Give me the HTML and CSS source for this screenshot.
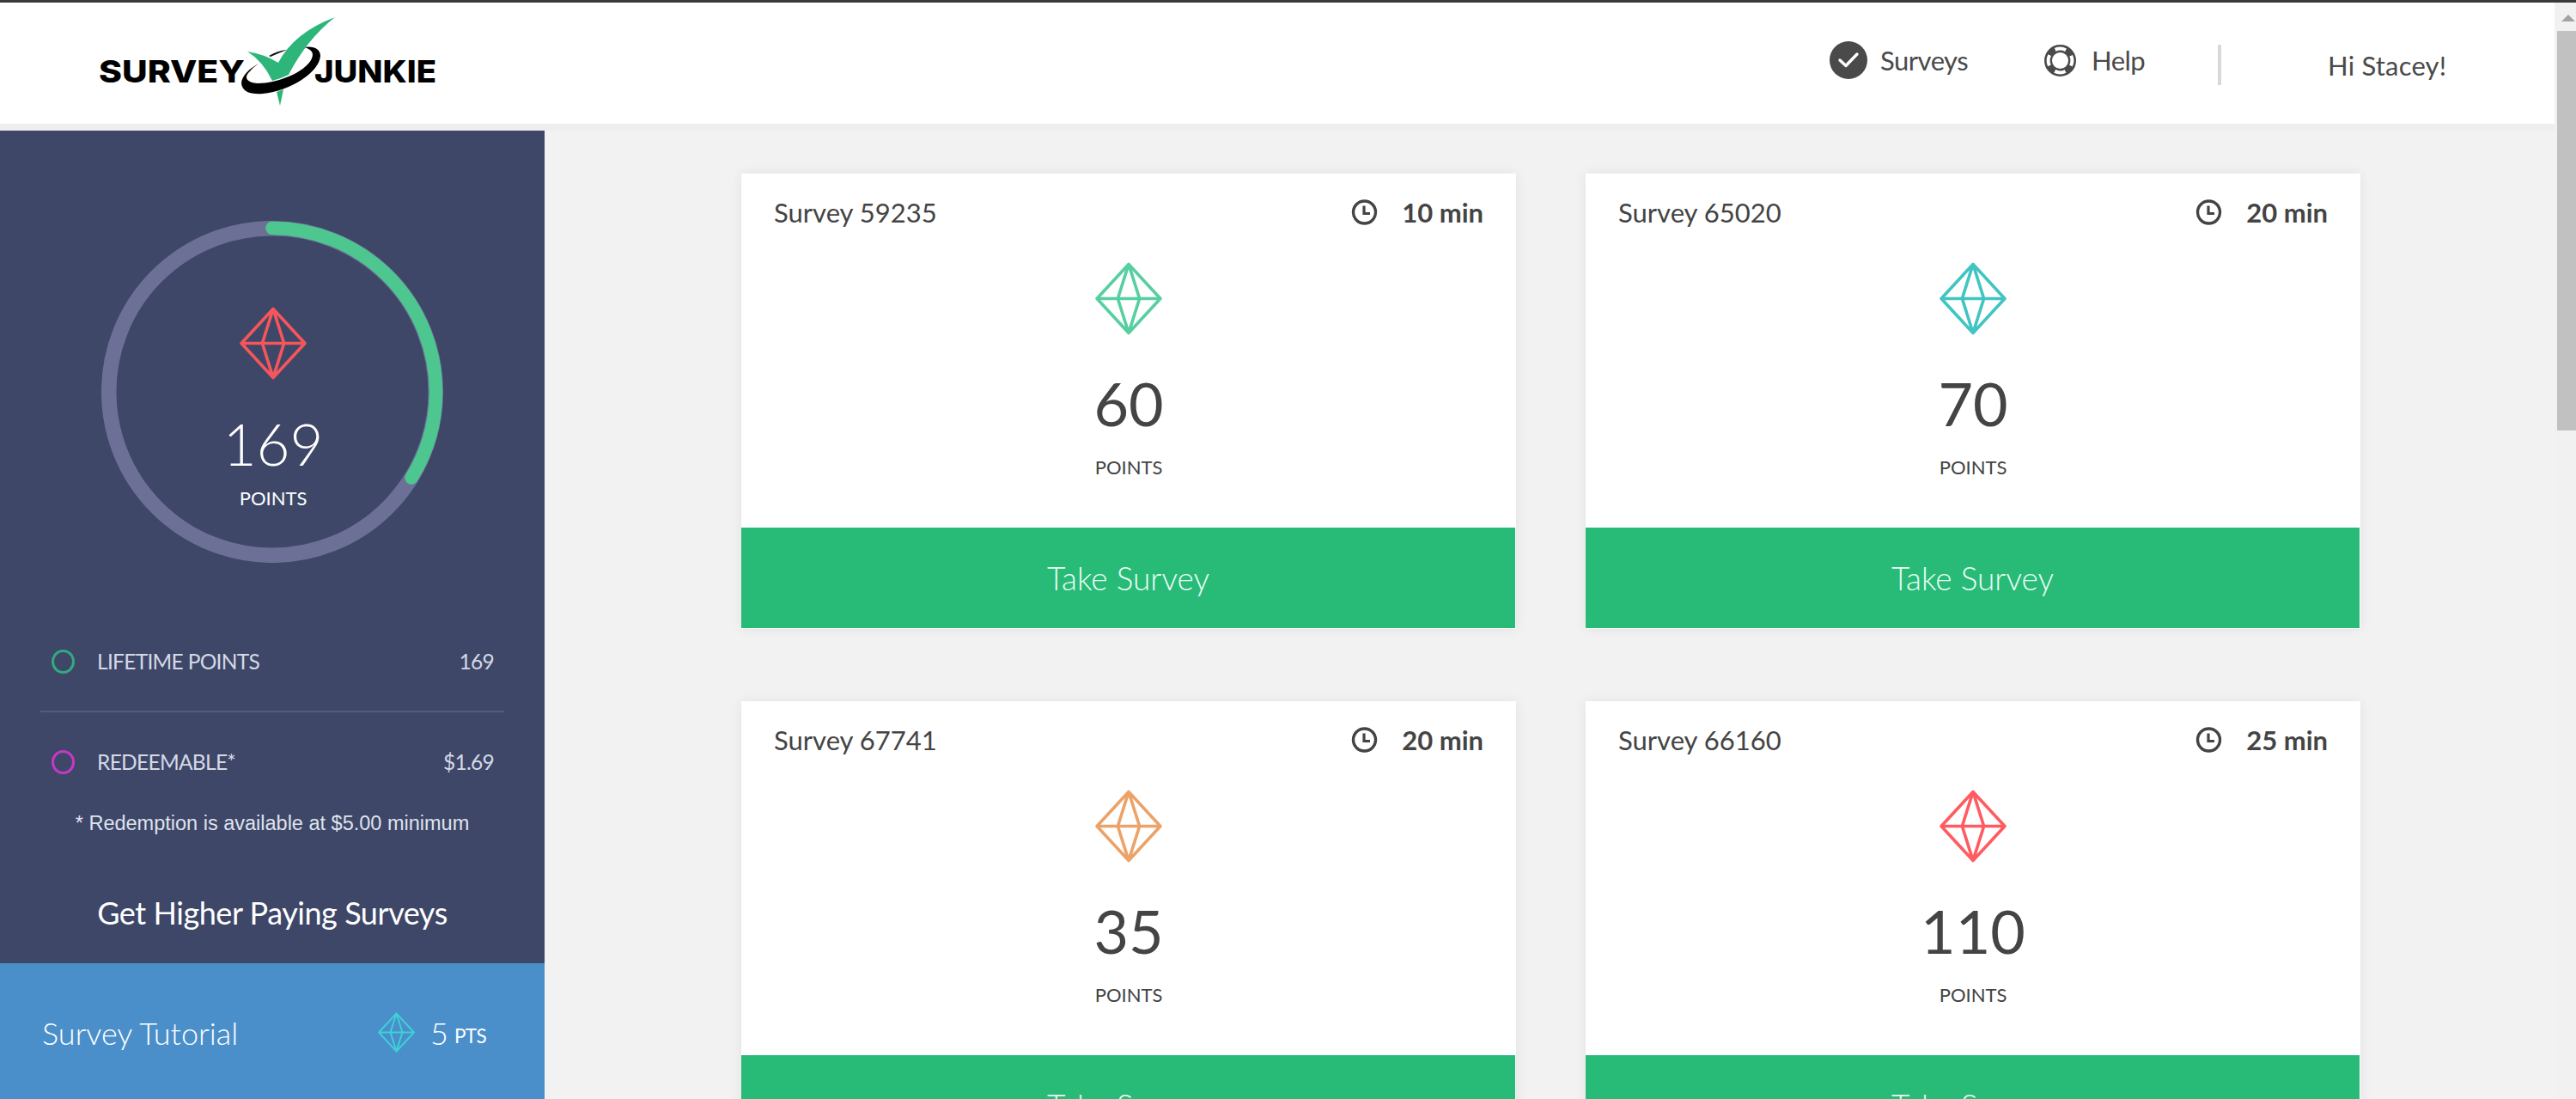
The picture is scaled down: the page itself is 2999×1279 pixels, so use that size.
FILE: index.html
```html
<!DOCTYPE html>
<html lang="en">
<head>
    <meta charset="UTF-8">
    <meta name="viewport" content="width=device-width, initial-scale=1.0">
    <title>Survey Junkie</title>
    <link rel="stylesheet" href="styles.css">
</head>
<body>
    <!-- Shared icons -->
    <svg class="sprite">
        <symbol id="gem" viewBox="0 0 77 84">
            <path d="M38.5 2.5 L75 42 L38.5 81.5 L2 42 Z M2 42 H75 M38.5 2.5 L26 42 L38.5 81.5 L51 42 Z" fill="none" stroke="currentColor" stroke-width="3.6" stroke-linejoin="round" />
        </symbol>
        <symbol id="clock" viewBox="0 0 31 30">
            <circle cx="15.5" cy="15" r="13" fill="none" stroke="currentColor" stroke-width="3.4" />
            <path d="M15 7.5 V16.5 H22" fill="none" stroke="currentColor" stroke-width="3.2" />
        </symbol>
    </svg>

    <div class="page">
        <header class="header">
            <svg class="logo" viewBox="0 0 400 110">
                <text class="logo-text" x="-1" y="79" textLength="170" lengthAdjust="spacingAndGlyphs">SURVEY</text>
                <text class="logo-text" x="250" y="79" textLength="142" lengthAdjust="spacingAndGlyphs">JUNKIE</text>
                <path d="M197 48 Q207 42 218 41 Q208 45 199 49 Z" fill="#111" />
                <path d="M185 57 C174 63 165 72 165 80 C166 90 176 93 190 92 C222 89 256 67 257 48 C257 40 249 36 238 38 C246 40 250 44 247 51 C240 67 207 80 184 80 C171 79 168 73 174 67 Q179 61 185 57 Z" fill="#000" />
                <path d="M172 43 Q192 46 208 56 Q226 21 274 3 Q241 29 220 70 Q210 75 201 77 Q190 54 172 43 Z M206 90 L214 87 L210 106 Z" fill="#2eb67a" />
            </svg>
            <nav class="nav">
                <a class="nav-item nav-surveys">
                    <svg width="44" height="44" viewBox="0 0 44 44">
                        <circle cx="22" cy="22" r="22" fill="#4a4a4a" />
                        <path d="M12 22 L19 28.5 L32 15" fill="none" stroke="#fff" stroke-width="3.4" stroke-linecap="round" stroke-linejoin="round" />
                    </svg>
                    <span>Surveys</span>
                </a>
                <a class="nav-item nav-help">
                    <svg width="37" height="37" viewBox="0 0 37 37">
                        <circle cx="18.5" cy="18.5" r="14" fill="none" stroke="#4a4a4a" stroke-width="9" />
                        <circle cx="18.5" cy="18.5" r="13.9" fill="none" stroke="#fff" stroke-width="4" stroke-dasharray="12.8 9.03" stroke-dashoffset="6.4" />
                    </svg>
                    <span>Help</span>
                </a>
                <div class="nav-divider"></div>
                <span class="greeting">Hi Stacey!</span>
            </nav>
        </header>

        <div class="layout">
            <aside class="sidebar">
                <div class="summary">
                    <div class="ring">
                        <svg class="ring-chart" viewBox="0 0 398 398">
                            <circle cx="199" cy="199" r="190.3" fill="none" stroke="#6d7096" stroke-width="17.5" />
                            <circle cx="199" cy="199" r="190.5" fill="none" stroke="#4dc78f" stroke-width="15.5" stroke-linecap="round" pathLength="500" stroke-dasharray="169 331" transform="rotate(-90 199 199)" />
                        </svg>
                        <div class="ring-info">
                            <svg class="gem red"><use href="#gem" /></svg>
                            <div class="ring-value">169</div>
                            <div class="points-label">POINTS</div>
                        </div>
                    </div>

                    <div class="stats">
                        <div class="stat">
                            <span class="dot green-dot"></span>
                            <span class="stat-name">LIFETIME POINTS</span>
                            <span class="stat-value">169</span>
                        </div>
                        <div class="stat">
                            <span class="dot pink-dot"></span>
                            <span class="stat-name">REDEEMABLE*</span>
                            <span class="stat-value">$1.69</span>
                        </div>
                    </div>
                    <p class="note">* Redemption is available at $5.00 minimum</p>
                    <h2 class="side-title">Get Higher Paying Surveys</h2>
                </div>
                <div class="tutorial">
                    <span class="tutorial-name">Survey Tutorial</span>
                    <svg class="tutorial-gem"><use href="#gem" /></svg>
                    <span class="tutorial-points">5</span>
                    <span class="tutorial-unit">PTS</span>
                </div>
            </aside>

            <main class="surveys">
                <section class="card">
                    <div class="card-head">
                        <span class="card-name">Survey 59235</span>
                        <svg class="clock"><use href="#clock" /></svg>
                        <span class="card-time">10 min</span>
                    </div>
                    <svg class="gem green"><use href="#gem" /></svg>
                    <div class="card-value">60</div>
                    <div class="points-label">POINTS</div>
                    <button class="take">Take Survey</button>
                </section>
                <section class="card">
                    <div class="card-head">
                        <span class="card-name">Survey 65020</span>
                        <svg class="clock"><use href="#clock" /></svg>
                        <span class="card-time">20 min</span>
                    </div>
                    <svg class="gem teal"><use href="#gem" /></svg>
                    <div class="card-value">70</div>
                    <div class="points-label">POINTS</div>
                    <button class="take">Take Survey</button>
                </section>
                <section class="card">
                    <div class="card-head">
                        <span class="card-name">Survey 67741</span>
                        <svg class="clock"><use href="#clock" /></svg>
                        <span class="card-time">20 min</span>
                    </div>
                    <svg class="gem orange"><use href="#gem" /></svg>
                    <div class="card-value">35</div>
                    <div class="points-label">POINTS</div>
                    <button class="take">Take Survey</button>
                </section>
                <section class="card">
                    <div class="card-head">
                        <span class="card-name">Survey 66160</span>
                        <svg class="clock"><use href="#clock" /></svg>
                        <span class="card-time">25 min</span>
                    </div>
                    <svg class="gem coral"><use href="#gem" /></svg>
                    <div class="card-value">110</div>
                    <div class="points-label">POINTS</div>
                    <button class="take">Take Survey</button>
                </section>
            </main>
        </div>
    </div>

    <div class="scrollbar">
        <div class="scroll-arrow"></div>
        <div class="scroll-thumb"></div>
    </div>
</body>
</html>
```
FILE: styles.css
```css
* {
    box-sizing: border-box;
}

html {
    overflow: hidden;
}

body {
    margin: 0;
    height: 1279px;
    display: flex;
    overflow: hidden;
    border-top: 3px solid #3a3a3a;
    background-color: #f2f2f2;
    color: #444;
    font-family: Lato, sans-serif;
}

svg {
    display: block;
    flex-shrink: 0;
}

.sprite {
    position: absolute;
    width: 0;
    height: 0;
}

.page {
    flex: 1;
}

/* Header */
.header {
    height: 149px;
    display: flex;
    justify-content: space-between;
    background-color: #fff;
    border-bottom: 8px solid #efedee;
}

.logo {
    width: 400px;
    height: 110px;
    margin: 14px 0 0 116px;
}

.logo-text {
    font-family: Inter, "Liberation Sans", sans-serif;
    font-size: 36px;
    font-weight: 800;
    fill: #000;
}

.nav {
    display: flex;
    align-items: flex-start;
    padding-right: 126px;
    font-size: 31px;
    line-height: 44px;
    color: #4a4a4a;
}

.nav-item {
    display: flex;
    align-items: center;
}

.nav-surveys {
    margin-top: 45px;
    gap: 15px;
    width: 250px;
    letter-spacing: -0.5px;
}

.nav-help {
    margin-top: 45px;
    gap: 18px;
    width: 202px;
    letter-spacing: -0.5px;
}

.nav-divider {
    width: 4px;
    height: 47px;
    margin-top: 49px;
    background-color: #d8d8d8;
}

.greeting {
    margin-top: 51px;
    margin-left: 124px;
    width: 138px;
    letter-spacing: 0.2px;
    white-space: nowrap;
}

.layout {
    display: flex;
}

/* Sidebar */
.sidebar {
    width: 634px;
    color: #fff;
}

.summary {
    height: 969px;
    padding-top: 105px;
    background-color: #3e4768;
}

.ring {
    display: grid;
    width: 398px;
    margin-left: 118px;
}

.ring-chart,
.ring-info {
    grid-area: 1 / 1;
    width: 398px;
    height: 398px;
}

.ring-info {
    padding-top: 100px;
    padding-left: 2px;
    text-align: center;
}

.gem {
    width: 78px;
    height: 85px;
    margin: 0 auto;
}

.red {
    color: #f4565b;
}

.green {
    color: #57cfa0;
}

.teal {
    color: #41c5c2;
}

.orange {
    color: #eba369;
}

.coral {
    color: #ff5b60;
}

.ring-value {
    margin-top: 39px;
    font-size: 67px;
    font-weight: 300;
    line-height: 70px;
}

.points-label {
    margin-top: 16px;
    font-size: 22px;
    line-height: 26px;
    text-align: center;
}

.stats {
    margin: 57px 47px 0;
}

.stat {
    display: flex;
    align-items: center;
    height: 115px;
    padding: 0 12px 0 13px;
    font-size: 24.5px;
    letter-spacing: -0.7px;
    color: #d5d9e6;
}

.stat:first-child {
    height: 117px;
    border-bottom: 2px solid #535d78;
}

.dot {
    width: 27px;
    height: 28px;
    margin-right: 26px;
    border: 3px solid;
    border-radius: 50%;
}

.green-dot {
    border-color: #33a981;
}

.pink-dot {
    border-color: #c738c8;
}

.stat-value {
    margin-left: auto;
}

.note {
    margin: 0;
    font-family: "Liberation Sans", Arial, sans-serif;
    font-size: 23.5px;
    line-height: 29px;
    text-align: center;
    color: #dfe2ec;
}

.side-title {
    margin: 67px 0 0;
    font-size: 36px;
    font-weight: 400;
    line-height: 44px;
    letter-spacing: -0.45px;
    text-align: center;
}

.tutorial {
    height: 161px;
    display: flex;
    align-items: center;
    padding-left: 49px;
    background-color: #4b8fca;
    font-size: 36px;
    font-weight: 300;
}

.tutorial-name {
    width: 391px;
}

.tutorial-gem {
    width: 43px;
    height: 47px;
    margin-right: 18px;
    color: #3dd0d9;
}

.tutorial-unit {
    margin-left: 7px;
    padding-top: 7px;
    font-size: 22.5px;
    font-weight: 400;
    letter-spacing: -0.6px;
}

/* Survey cards */
.surveys {
    display: grid;
    grid-template-columns: 902px 902px;
    grid-auto-rows: 530px;
    gap: 84px 81px;
    padding: 50px 0 0 229px;
}

.card {
    background-color: #fff;
    box-shadow: 0 0 14px rgba(0, 0, 0, 0.07);
}

.card-head {
    display: flex;
    align-items: center;
    height: 90px;
    margin-bottom: 13px;
    padding: 0 38px;
    font-size: 31px;
}

.clock {
    width: 31px;
    height: 30px;
    margin: 0 28px 0 auto;
}

.card-time {
    font-weight: 700;
}

.card-value {
    margin-top: 44px;
    font-size: 70px;
    line-height: 70px;
    text-align: center;
}

.card .points-label {
    margin-top: 27px;
}

.take {
    display: block;
    width: 901px;
    height: 117px;
    margin-top: 57px;
    padding: 0;
    border: none;
    background-color: #28ba77;
    color: #e9fff4;
    font-family: Lato, sans-serif;
    font-size: 37px;
    font-weight: 300;
    cursor: pointer;
}

/* Scrollbar */
.scrollbar {
    width: 25px;
    background-color: #f1f1f1;
    padding-left: 3px;
}

.scroll-arrow {
    width: 0;
    margin: 14px auto 11px 5px;
    border: 8px solid transparent;
    border-top: 0;
    border-bottom: 8px solid #a3a3a3;
}

.scroll-thumb {
    height: 465px;
    background-color: #c1c1c1;
}
```
